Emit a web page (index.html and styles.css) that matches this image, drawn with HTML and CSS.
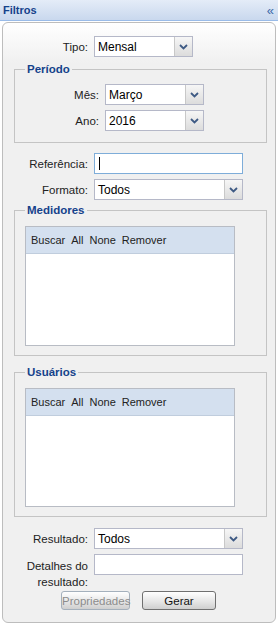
FILE: index.html
```html
<!DOCTYPE html>
<html>
<head>
    <meta charset="UTF-8">
    <title>Filtros</title>
    <link rel="stylesheet" href="styles.css">
</head>
<body>
    <div class="header">
        <span class="title">Filtros</span>
        <span class="collapse">&laquo;</span>
    </div>
    <div class="panel">
        <div class="row">
            <label class="lbl">Tipo:</label>
            <div class="combo short"><span class="val">Mensal</span><span class="trigger"><svg width="9" height="6" viewBox="0 0 9 6"><path d="M1 1 L4.5 4.5 L8 1" fill="none" stroke="#3e5a84" stroke-width="1.8"/></svg></span></div>
        </div>

        <fieldset class="group periodo">
            <legend>Período</legend>
            <div class="row">
                <label class="lbl">Mês:</label>
                <div class="combo short"><span class="val">Março</span><span class="trigger"><svg width="9" height="6" viewBox="0 0 9 6"><path d="M1 1 L4.5 4.5 L8 1" fill="none" stroke="#3e5a84" stroke-width="1.8"/></svg></span></div>
            </div>
            <div class="row gap">
                <label class="lbl">Ano:</label>
                <div class="combo short"><span class="val">2016</span><span class="trigger"><svg width="9" height="6" viewBox="0 0 9 6"><path d="M1 1 L4.5 4.5 L8 1" fill="none" stroke="#3e5a84" stroke-width="1.8"/></svg></span></div>
            </div>
        </fieldset>

        <div class="row ref">
            <label class="lbl">Referência:</label>
            <div class="textbox focus"><span class="caret"></span></div>
        </div>
        <div class="row gap">
            <label class="lbl">Formato:</label>
            <div class="combo long"><span class="val">Todos</span><span class="trigger"><svg width="9" height="6" viewBox="0 0 9 6"><path d="M1 1 L4.5 4.5 L8 1" fill="none" stroke="#3e5a84" stroke-width="1.8"/></svg></span></div>
        </div>

        <fieldset class="group medidores">
            <legend>Medidores</legend>
            <div class="grid">
                <div class="toolbar">
                    <span>Buscar</span><span>All</span><span>None</span><span>Remover</span>
                </div>
            </div>
        </fieldset>

        <fieldset class="group usuarios">
            <legend>Usuários</legend>
            <div class="grid">
                <div class="toolbar">
                    <span>Buscar</span><span>All</span><span>None</span><span>Remover</span>
                </div>
            </div>
        </fieldset>

        <div class="row resultado">
            <label class="lbl">Resultado:</label>
            <div class="combo long"><span class="val">Todos</span><span class="trigger"><svg width="9" height="6" viewBox="0 0 9 6"><path d="M1 1 L4.5 4.5 L8 1" fill="none" stroke="#3e5a84" stroke-width="1.8"/></svg></span></div>
        </div>
        <div class="row detalhes">
            <label class="lbl two">Detalhes do resultado:</label>
            <div class="textbox"></div>
        </div>

        <div class="buttons">
            <button class="btn disabled" type="button">Propriedades</button>
            <button class="btn gerar" type="button">Gerar</button>
        </div>
    </div>
</body>
</html>
```

FILE: styles.css
```css
body {
    margin: 0;
    width: 278px;
    height: 626px;
    overflow: hidden;
    font-family: "Liberation Sans", Arial, sans-serif;
    font-size: 11.5px;
    color: #000;
    background-color: #ffffff;
}
.header {
    height: 20px;
    display: flex;
    align-items: center;
    justify-content: space-between;
    padding: 0 3px;
    background: linear-gradient(#e4ecf8, #c9d8ee);
    border-bottom: 1px solid #99bbe8;
}
.title {
    font-weight: bold;
    font-size: 11px;
    color: #15428b;
}
.collapse {
    color: #3e6aa8;
    font-size: 13px;
    line-height: 13px;
    margin-right: 1px;
}
.panel {
    margin: 1px 2px 0 2px;
    height: 586px;
    padding: 13px 8px 0 11px;
    border: 1px solid #bdbdbd;
    border-radius: 6px;
    background: linear-gradient(#ffffff, #f0f0f0 40px);
}
.row {
    display: flex;
    align-items: center;
}
.row.gap {
    margin-top: 5px;
}
.lbl {
    width: 74px;
    margin-right: 6px;
    text-align: right;
    color: #222;
}
.lbl.two {
    align-self: flex-start;
    margin-top: 4px;
    line-height: 16px;
}
.combo {
    height: 19px;
    display: flex;
    border: 1px solid #b5b8c8;
    background: #fff;
}
.combo.short {
    width: 97px;
}
.combo.long {
    width: 147px;
}
.combo .val {
    flex: 1;
    padding-left: 3px;
    line-height: 20px;
    font-size: 12px;
}
.trigger {
    width: 17px;
    display: flex;
    align-items: center;
    justify-content: center;
    border-left: 1px solid #c8c8c8;
    background: linear-gradient(#f6f6f6, #dcdcdc);
}
.textbox {
    width: 147px;
    height: 19px;
    border: 1px solid #b5b8c8;
    background: #fff;
    display: flex;
    align-items: center;
}
.textbox.focus {
    border-color: #7eadd9;
}
.caret {
    width: 1px;
    height: 13px;
    margin-left: 4px;
    background: #000;
}
.group {
    margin: 5px 0 0 0;
    padding: 0 10px 11px 10px;
    border: 1px solid #c4c4c4;
}
.group legend {
    padding: 0 2px;
    font-weight: bold;
    font-size: 11.5px;
    line-height: 14px;
    color: #15428b;
}
.periodo legend + .row {
    margin-top: 8px;
}
.ref {
    margin-top: 10px;
}
.medidores {
    margin-top: 3px;
    padding-bottom: 9px;
}
.usuarios {
    margin-top: 9px;
    padding-bottom: 9px;
}
.grid {
    margin-top: 9px;
    width: 208px;
    border: 1px solid #b8bcc4;
    background: #fff;
}
.medidores .grid {
    height: 118px;
}
.usuarios .grid {
    height: 117px;
}
.toolbar {
    height: 26px;
    display: flex;
    align-items: center;
    gap: 6px;
    padding-left: 5px;
    font-size: 11px;
    background: #d4e0ef;
    border-bottom: 1px solid #c0cddd;
    color: #222;
}
.resultado {
    margin-top: 11px;
}
.detalhes {
    margin-top: 5px;
    height: 34px;
    align-items: flex-start;
}
.buttons {
    display: flex;
    gap: 12px;
    margin-top: 3px;
    padding-left: 47px;
}
.btn {
    height: 19px;
    padding: 0;
    font-family: "Liberation Sans", Arial, sans-serif;
    font-size: 11.5px;
    border: 1px solid #707070;
    border-radius: 3px;
    background: linear-gradient(#ffffff, #e4e4e4 60%, #cfcfcf);
    color: #111;
}
.btn.disabled {
    width: 69px;
    color: #8c8c8c;
    border-color: #a4b0bc;
}
.btn.gerar {
    width: 74px;
}
```
